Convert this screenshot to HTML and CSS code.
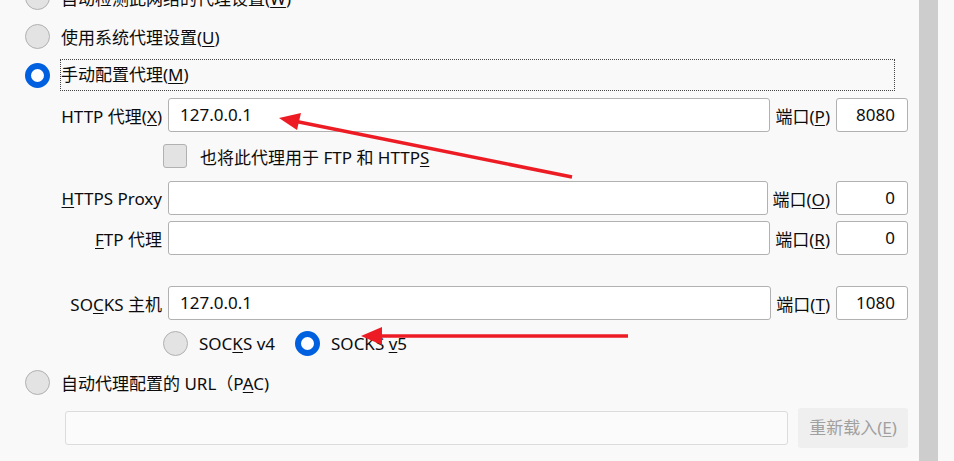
FILE: index.html
```html
<!DOCTYPE html>
<html lang="zh-CN">
<head>
    <meta charset="utf-8" />
    <title>连接设置</title>
    <link rel="stylesheet" href="styles.css">
</head>
<body>
    <div class="page">
        <div class="panel">
            <div class="option">
                <span class="radio"></span>
                <span class="text">自动检测此网络的代理设置(<u>W</u>)</span>
            </div>
            <div class="option">
                <span class="radio"></span>
                <span class="text">使用系统代理设置(<u>U</u>)</span>
            </div>
            <div class="option focused">
                <span class="radio checked"></span>
                <span class="text">手动配置代理(<u>M</u>)</span>
            </div>

            <div class="field">
                <span class="name">HTTP 代理(<u>X</u>)</span>
                <span class="input">127.0.0.1</span>
                <span class="port_name">端口(<u>P</u>)</span>
                <span class="port">8080</span>
            </div>
            <div class="share">
                <span class="checkbox"></span>
                <span class="text">也将此代理用于 FTP 和 HTTP<u>S</u></span>
            </div>
            <div class="field https">
                <span class="name"><u>H</u>TTPS Proxy</span>
                <span class="input"></span>
                <span class="port_name">端口(<u>O</u>)</span>
                <span class="port">0</span>
            </div>
            <div class="field ftp">
                <span class="name"><u>F</u>TP 代理</span>
                <span class="input"></span>
                <span class="port_name">端口(<u>R</u>)</span>
                <span class="port">0</span>
            </div>
            <div class="field socks">
                <span class="name">SO<u>C</u>KS 主机</span>
                <span class="input">127.0.0.1</span>
                <span class="port_name">端口(<u>T</u>)</span>
                <span class="port">1080</span>
            </div>
            <div class="versions">
                <span class="radio"></span>
                <span class="text">SOC<u>K</u>S v4</span>
                <span class="radio checked"></span>
                <span class="text">SOCKS <u>v</u>5</span>
            </div>
            <div class="option pac">
                <span class="radio"></span>
                <span class="text">自动代理配置的 URL（P<u>A</u>C)</span>
            </div>
            <div class="pac_row">
                <span class="input disabled"></span>
                <span class="reload">重新载入(<u>E</u>)</span>
            </div>
        </div>
        <div class="scrollbar"></div>
    </div>

    <!-- 标注箭头 -->
    <svg class="marks" width="954" height="461" viewBox="0 0 954 461">
        <line x1="572" y1="177" x2="294" y2="121" stroke="#ed1c24" stroke-width="3.5" />
        <polygon points="279,118 301,113 297,130" fill="#ed1c24" />
        <line x1="628" y1="336" x2="376" y2="336" stroke="#ed1c24" stroke-width="3.5" />
        <polygon points="361,336 382,327 382,345" fill="#ed1c24" />
    </svg>
</body>
</html>
```

FILE: styles.css
```css
body {
    margin: 0;
    background: #f9f9f9;
    color: #0c0c0d;
    font-family: "Noto Sans", "Noto Sans CJK SC", sans-serif;
    font-size: 17px;
    overflow: hidden;
}

u {
    text-decoration: underline;
    text-underline-offset: 2px;
}

.page {
    display: flex;
    height: 461px;
}

.panel {
    width: 883px;
    padding: 0 11px 0 25px;
    margin-top: -15px;
}

.scrollbar {
    width: 19px;
    height: 461px;
    background: #cdcdcd;
}

.option {
    display: flex;
    align-items: center;
    height: 25px;
    margin-bottom: 14px;
}

.option .text {
    margin-left: 11px;
    white-space: nowrap;
}

.option.focused {
    height: 32px;
    margin-top: -4px;
    margin-bottom: 7px;
}

.option.focused .text {
    flex: 1;
    height: 30px;
    line-height: 30px;
    margin-left: 10px;
    margin-right: 13px;
    border: 1px dotted #444;
}

.radio {
    flex: none;
    box-sizing: border-box;
    width: 25px;
    height: 25px;
    border-radius: 50%;
    border: 1px solid #b1b1b1;
    background: #e3e3e3;
}

.radio.checked {
    border: 6px solid #0060df;
    background: #fff;
}

.field {
    display: flex;
    align-items: center;
    height: 34px;
    margin-left: 36px;
}

.field .name {
    width: 101px;
    margin-right: 6px;
    text-align: right;
    white-space: nowrap;
}

.input {
    flex: 1;
    box-sizing: border-box;
    height: 34px;
    line-height: 32px;
    padding-left: 11px;
    border: 1px solid #b1b1b1;
    border-radius: 3px;
    background: #fff;
}

.port_name {
    margin: 0 6px 0 5px;
    white-space: nowrap;
}

.port {
    box-sizing: border-box;
    width: 72px;
    height: 34px;
    line-height: 32px;
    padding-right: 12px;
    text-align: right;
    border: 1px solid #b1b1b1;
    border-radius: 3px;
    background: #fff;
}

.share {
    display: flex;
    align-items: center;
    height: 24px;
    margin: 12px 0 13px 138px;
}

.checkbox {
    box-sizing: border-box;
    width: 24px;
    height: 24px;
    border: 1px solid #b1b1b1;
    border-radius: 3px;
    background: #e3e3e3;
}

.share .text {
    margin-left: 13px;
}

.field.ftp {
    margin-top: 6px;
}

.field.socks {
    margin-top: 31px;
}

.versions {
    display: flex;
    align-items: center;
    height: 25px;
    margin: 11px 0 14px 138px;
}

.versions .text {
    margin: 0 20px 0 11px;
}

.pac_row {
    display: flex;
    align-items: center;
    height: 40px;
    margin: -1px 0 0 40px;
}

.input.disabled {
    border-color: #dcdcdc;
    background: #fbfbfb;
}

.reload {
    width: 110px;
    height: 40px;
    line-height: 40px;
    margin-left: 10px;
    text-align: center;
    color: #a0a0a0;
    background: #efefef;
    border-radius: 3px;
}

.marks {
    position: absolute;
    left: 0;
    top: 0;
    pointer-events: none;
}
```
